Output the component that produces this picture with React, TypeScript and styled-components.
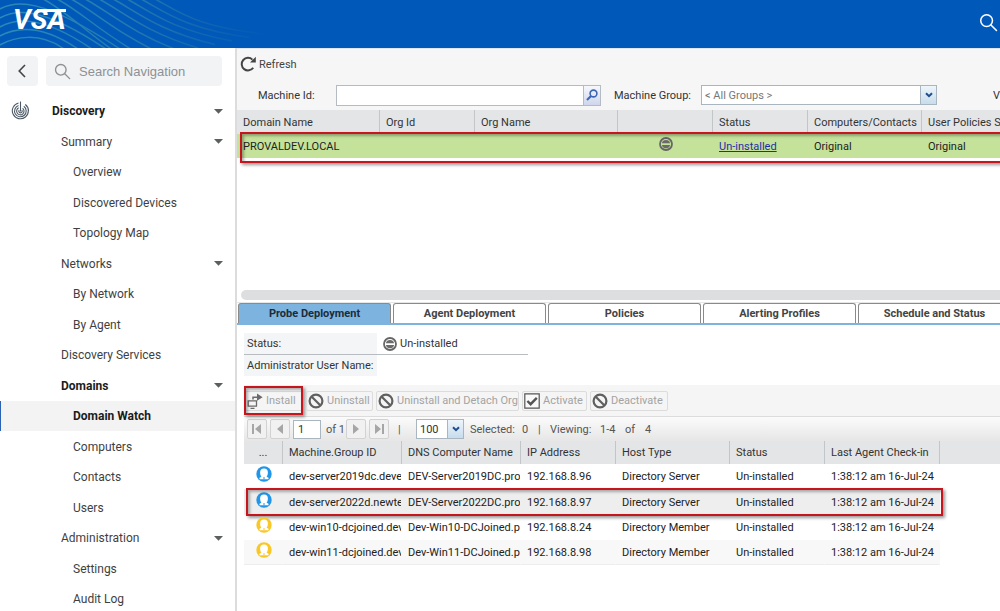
import React from 'react';
import styled, { createGlobalStyle, css } from 'styled-components';

const GlobalStyle = createGlobalStyle`
  *, *::before, *::after { box-sizing: border-box; }
  body { margin: 0; background: #fff; overflow: hidden; }
  body, button, input, select { font-family: Roboto, "Liberation Sans", sans-serif; }
`;

const RED = '#c4161c';

const annotation = css`
  content: '';
  position: absolute;
  border: 2px solid ${RED};
  box-shadow: 2px 2px 3px rgba(0, 0, 0, 0.4), inset 2px 2px 3px rgba(0, 0, 0, 0.3);
  pointer-events: none;
`;

/* ---------- shell ---------- */

const Shell = styled.div`
  display: flex;
  flex-direction: column;
  height: 100vh;
  overflow: hidden;
  color: #333;
`;

const Header = styled.header`
  position: relative;
  display: flex;
  align-items: center;
  justify-content: space-between;
  flex: none;
  height: 48px;
  padding: 0 2px 8px 13px;
  background: #0059b8;
`;

const Waves = styled.svg`
  position: absolute;
  top: 0;
  left: 0;
`;

const Logo = styled.a`
  position: relative;
  color: #fff;
  font-size: 28px;
  line-height: 40px;
  font-weight: 700;
  font-style: italic;
  text-decoration: none;
  &::after {
    content: '';
    position: absolute;
    top: 9px;
    left: 24px;
    right: 0;
    height: 3px;
    background: #fff;
  }
`;

const HeaderSearch = styled.button`
  position: relative;
  display: flex;
  margin-top: 4px;
  padding: 0;
  border: 0;
  background: none;
  color: #fff;
`;

const Body = styled.div`
  display: flex;
  flex: 1;
  min-height: 0;
`;

/* ---------- sidebar ---------- */

const Sidebar = styled.nav`
  flex: none;
  width: 237px;
  border-right: 2px solid #dcdcdc;
  overflow: hidden;
`;

const SidebarTop = styled.div`
  display: flex;
  gap: 8px;
  padding: 8px 13px 10px 7px;
`;

const BackButton = styled.button`
  display: flex;
  align-items: center;
  justify-content: center;
  width: 31px;
  height: 30px;
  padding: 0 2px 0 0;
  border: 0;
  border-radius: 4px;
  background: #f2f3f4;
  color: #444;
`;

const NavSearch = styled.label`
  display: flex;
  flex: 1;
  align-items: center;
  gap: 8px;
  min-width: 0;
  height: 30px;
  padding: 0 8px;
  border-radius: 4px;
  background: #f2f3f4;
  color: #8d9194;
`;

const NavSearchInput = styled.input`
  flex: 1;
  min-width: 0;
  padding: 0;
  border: 0;
  background: none;
  outline: 0;
  font-family: "Liberation Sans", sans-serif;
  font-size: 13px;
  &::placeholder { color: #8d9194; opacity: 1; }
`;

const NavList = styled.ul`
  margin: 0;
  padding: 0;
  list-style: none;
`;

const navRow = css<{ $level: number; $bold?: boolean; $active?: boolean }>`
  display: flex;
  align-items: center;
  width: 100%;
  height: 100%;
  padding: 0 12px 0 ${p => [52, 61, 73][p.$level]}px;
  border: 0;
  background: none;
  color: ${p => (p.$bold ? '#1c1c1c' : '#3f3f3f')};
  font-size: 12px;
  font-weight: ${p => (p.$bold ? 700 : 400)};
  text-align: left;
  text-decoration: none;
`;

const NavItem = styled.li`
  height: 30px;
  &:nth-child(even) { height: 31px; }
`;

const NavGroup = styled.button`
  ${navRow}
  justify-content: space-between;
  position: relative;
`;

const NavLink = styled.a`
  ${navRow}
  ${p => p.$active && css`
    background: #f3f3f4;
    box-shadow: inset 1px 0 0 #2b62b4;
  `}
`;

const Radar = styled.svg`
  position: absolute;
  left: 11px;
  top: 5px;
`;

/* ---------- main, upper pane ---------- */

const Main = styled.main`
  flex: 1;
  min-width: 0;
  overflow: hidden;
  font-size: 11px;
`;

const Filters = styled.section`
  height: 62px;
  background: #f6f6f6;
  border-top: 1px solid #dfe6ee;
`;

const Refresh = styled.button`
  display: flex;
  align-items: center;
  gap: 3px;
  height: 30px;
  padding: 0 3px;
  border: 0;
  background: none;
  color: #444;
  font-size: 11px;
`;

const FilterRow = styled.div`
  display: flex;
  align-items: center;
  height: 32px;
  padding-left: 8px;
  white-space: nowrap;
`;

const Label = styled.label<{ $width: number }>`
  flex: none;
  width: ${p => p.$width}px;
  padding-left: 13px;
`;

const Field = styled.div<{ $width: number }>`
  display: flex;
  flex: none;
  width: ${p => p.$width}px;
  height: 21px;
  border: 1px solid #b3bcc4;
  background: #fff;
`;

const FieldInput = styled.input`
  flex: 1;
  min-width: 0;
  padding: 0 5px;
  border: 0;
  outline: 0;
  background: none;
  font-size: 11px;
`;

const FieldButton = styled.button`
  display: flex;
  flex: none;
  align-items: center;
  justify-content: center;
  width: 17px;
  padding: 0;
  border: 0;
  border-left: 1px solid #b3bcc4;
  background: linear-gradient(#f7f8fc, #cfd6ec);
`;

const SelectBox = styled.div<{ $width: number }>`
  position: relative;
  display: flex;
  flex: none;
  width: ${p => p.$width}px;
  height: 20px;
  border: 1px solid #a9b5bf;
  background: #fff;
`;

const Select = styled.select<{ $strong?: boolean }>`
  appearance: none;
  width: 100%;
  padding: 0 18px 0 3px;
  border: 0;
  outline: 0;
  background: none;
  color: ${p => (p.$strong ? '#333' : '#777')};
  font-size: 11px;
`;

const SelectArrow = styled.span`
  position: absolute;
  top: 0;
  right: 0;
  bottom: 0;
  display: flex;
  align-items: center;
  justify-content: center;
  width: 16px;
  border-left: 1px solid #a9b5bf;
  background: linear-gradient(#eef5fb, #c8dcec);
  pointer-events: none;
`;

const ViewLabel = styled.span`
  margin-left: 56px;
`;

const DataTable = styled.table`
  border-collapse: separate;
  border-spacing: 0;
  table-layout: fixed;
  white-space: nowrap;
  text-align: left;
`;

const HeadCell = styled.th`
  padding: 0 0 0 6px;
  border-right: 1px solid #c3c6c8;
  background: #e3e5e7;
  font-weight: 400;
  overflow: hidden;
`;

const Cell = styled.td`
  padding: 0 0 0 6px;
  border-right: 1px solid transparent;
  overflow: hidden;
  color: #222;
`;

const DomainPane = styled.section`
  position: relative;
  height: 180px;
  overflow: hidden;
`;

const DomainTable = styled(DataTable)`
  width: 830px;
  ${HeadCell} { height: 24px; }
  ${Cell} { height: 24px; background: #c5e29b; }
`;

const DomainRow = styled.tr`
  position: relative;
  &::after {
    ${annotation}
    inset: -2px 0 -5px 3px;
  }
`;

const StatusLink = styled.a`
  color: #1f2fa8;
`;

const CenterIcon = styled.div`
  display: flex;
  justify-content: center;
  padding: 0 5px 5px 0;
`;

const ScrollTrack = styled.div`
  height: 10px;
  margin: 0 0 2px 4px;
  border-radius: 5px 0 0 5px;
  background: #dcdee0;
`;

/* ---------- main, lower pane ---------- */

const Tabs = styled.div`
  display: flex;
  gap: 2px;
  padding-left: 1px;
  border-top: 1px solid #e6e6e6;
  border-bottom: 2px solid #7fb2dc;
`;

const Tab = styled.button<{ $active?: boolean }>`
  flex: none;
  width: 153px;
  height: 20px;
  padding: 0;
  border: 1px solid #8a8a8a;
  border-bottom: 0;
  border-radius: 3px 3px 0 0;
  background: ${p => (p.$active ? '#7db4df' : '#fff')};
  color: ${p => (p.$active ? '#1e2b3a' : '#444')};
  font-size: 11px;
  font-weight: 700;
`;

const Detail = styled.section`
  padding: 8px 0 0 7px;
`;

const StatusGrid = styled.dl`
  display: grid;
  grid-template-columns: 133px 151px;
  margin: 0 0 9px;
  line-height: 21px;
`;

const Term = styled.dt<{ $line?: boolean }>`
  padding-left: 3px;
  background: #f4f5f7;
  border-bottom: ${p => (p.$line ? '1px solid #b9bcc0' : '0')};
`;

const Value = styled.dd<{ $line?: boolean }>`
  display: flex;
  align-items: center;
  gap: 3px;
  margin: 0;
  padding-left: 6px;
  border-bottom: ${p => (p.$line ? '1px solid #b9bcc0' : '0')};
`;

const ActionBar = styled.div`
  display: flex;
  align-items: center;
  gap: 3px;
  height: 31px;
  padding-left: 1px;
  background: #f5f5f5;
`;

const Action = styled.button<{ $width: number; $marked?: boolean }>`
  position: relative;
  display: flex;
  flex: none;
  align-items: center;
  gap: 3px;
  width: ${p => p.$width}px;
  height: 20px;
  padding: 0 0 0 1px;
  border: 1px solid #dcdcdc;
  border-radius: 2px;
  background: none;
  color: #a3a3a3;
  font-size: 11px;
  white-space: nowrap;
  svg { flex: none; }
  ${p => p.$marked && css`
    &::after {
      ${annotation}
      inset: -6px -1px -5px -2px;
    }
  `}
`;

const Pager = styled.div`
  display: flex;
  align-items: center;
  height: 25px;
  padding-left: 3px;
  border-top: 1px solid #dcdcdc;
  background: linear-gradient(#fbfbfb, #e6e6e6);
  color: #555;
  white-space: nowrap;
`;

const PageButton = styled.button`
  display: flex;
  align-items: center;
  justify-content: center;
  width: 20px;
  height: 20px;
  margin-right: 3px;
  padding: 0;
  border: 1px solid #d2d2d2;
  border-radius: 2px;
  background: #f1f1f1;
`;

const PageInput = styled.input`
  width: 28px;
  height: 19px;
  margin-right: 5px;
  padding: 0 4px;
  border: 1px solid #a9b5bf;
  font-size: 11px;
  color: #333;
`;

const PageText = styled.span<{ $width: number }>`
  flex: none;
  width: ${p => p.$width}px;
`;

const PageDivider = styled.span`
  width: 24px;
  padding-left: 6px;
`;

const PageStatus = styled.div`
  display: flex;
  padding-left: 6px;
`;

const AgentTable = styled(DataTable)`
  width: 696px;
  ${HeadCell} { height: 23px; }
  ${HeadCell}:first-child { padding: 0; text-align: center; }
  ${Cell} { height: 25px; }
`;

const AgentGrid = styled.div`
  background: linear-gradient(#e3e5e7, #e3e5e7) 0 0 / 100% 23px no-repeat;
`;

const AgentRow = styled.tr<{ $marked?: boolean; $alt?: boolean }>`
  position: relative;
  ${p => p.$alt && css`${Cell} { background: #f8f8f8; border-bottom: 1px solid #ededed; }`}
  ${p => p.$marked && css`
    ${Cell} { height: 26px; background: #eeeeee; }
    &::after {
      ${annotation}
      inset: -1px -3px -1px 2px;
    }
  `}
`;

/* ---------- icons ---------- */

const SearchIcon = ({ size = 19 }: { size?: number }) => (
  <svg width={size} height={size} viewBox="0 0 20 20" fill="none" stroke="currentColor" strokeWidth="1.6" aria-hidden="true">
    <circle cx="8" cy="8" r="6.2" />
    <path d="M12.6 12.6 18.4 18.4" strokeLinecap="round" />
  </svg>
);

const Caret = () => (
  <svg width="9" height="5" viewBox="0 0 9 5" aria-hidden="true"><path d="M0 0h9L4.5 4.8z" fill="#5b605f" /></svg>
);

const Chevron = () => (
  <svg width="8" height="6" viewBox="0 0 8 6" fill="none" stroke="#1f4e8c" strokeWidth="2" aria-hidden="true">
    <path d="M1 1.2 4 4.2 7 1.2" />
  </svg>
);

const EqualBadge = () => (
  <svg width="14" height="14" viewBox="0 0 14 14" aria-hidden="true">
    <circle cx="7" cy="7" r="6" fill="none" stroke="#666" strokeWidth="1.8" />
    <path d="M2.900 6.300A4.200 4.200 0 0 1 11.100 6.300zM2.900 7.900A4.200 4.200 0 0 0 11.100 7.900z" fill="#6a6a6a" />
  </svg>
);

const BanIcon = () => (
  <svg width="16" height="16" viewBox="0 0 16 16" fill="none" stroke="#606060" strokeWidth="2.2" aria-hidden="true">
    <circle cx="8" cy="8" r="6.4" />
    <path d="M3.5 3.5 12.5 12.5" />
  </svg>
);

const InstallIcon = () => (
  <svg width="16" height="16" viewBox="0 0 16 16" fill="none" stroke="#6a6a6a" aria-hidden="true">
    <path d="M1.200 7.800h8.300v5.400H1.200zM3.500 15.300h4" strokeWidth="1.300" />
    <path d="M6 6.500V4.200H11" strokeWidth="1.500" />
    <path d="M10 .6 15.600 4.200 10 7.800z" fill="#6a6a6a" stroke="none" />
  </svg>
);

const CheckIcon = () => (
  <svg width="16" height="16" viewBox="0 0 16 16" fill="none" stroke="#555" aria-hidden="true">
    <path d="M.8.8h14.4v14.4H.8z" strokeWidth="1.2" fill="#fafafa" />
    <path d="M3.4 8 6.6 11.2 12.8 4.8" strokeWidth="2.4" />
  </svg>
);

const PageIcon = ({ dir, edge }: { dir: 'prev' | 'next'; edge?: boolean }) => (
  <svg width="12" height="12" viewBox="0 0 12 12" fill="#a6a6a6" aria-hidden="true">
    <g transform={dir === 'next' ? 'matrix(-1 0 0 1 12 0)' : undefined}>
      <path d={edge ? 'M10 1v10L4 6zM1 1h2v10H1z' : 'M9 1v10L3 6z'} />
    </g>
  </svg>
);

const AgentIcon = ({ color }: { color: string }) => (
  <svg width="16" height="16" viewBox="0 0 16 16" aria-hidden="true">
    <circle cx="8" cy="8" r="7.700" fill={color} />
    <path d="M8 2.400c2.500 0 3.900 1.600 3.900 4 0 1.900-.6 3.300-1.300 4.300l1.900 1v1.500H3.500v-1.500l1.900-1C4.700 9.700 4.100 8.300 4.100 6.400c0-2.400 1.400-4 3.900-4z" fill="#fff" />
    <path d="M7 11h2v2.200H7z" fill={color} opacity=".5" />
  </svg>
);

const humps = Array.from({ length: 5 }, (_, i) =>
  `M-2 ${46 - 9 * i}C15 ${36 - 9 * i} 40 ${32 - 9 * i} ${64 + 14 * i} 49`);

const slopes = Array.from({ length: 9 }, (_, i) => {
  const x = 45 + 14 * i;
  return `M${x - 12} -6L${x} 0C${x + 25} 14 ${90 + 14 * i} ${36 - i} ${130 + 17 * i} ${62 - 3.5 * i}`;
});

const HeaderWaves = () => (
  <Waves width="300" height="48" viewBox="0 0 300 48" fill="none" aria-hidden="true">
    <defs>
      <linearGradient id="fade" gradientUnits="userSpaceOnUse" x1="0" y1="0" x2="270" y2="0">
        <stop offset="0" stopColor="#2a8bb8" />
        <stop offset=".5" stopColor="#2479ae" />
        <stop offset="1" stopColor="#1f6fa8" stopOpacity="0" />
      </linearGradient>
    </defs>
    {[...humps, ...slopes].map(d => <path key={d} d={d} stroke="url(#fade)" strokeWidth="1.500" />)}
  </Waves>
);

/* ---------- data ---------- */

type Nav = { text: string; level: number; group?: boolean; bold?: boolean; active?: boolean };

const navigation: Nav[] = [
  { text: 'Discovery', level: 0, group: true, bold: true },
  { text: 'Summary', level: 1, group: true },
  { text: 'Overview', level: 2 },
  { text: 'Discovered Devices', level: 2 },
  { text: 'Topology Map', level: 2 },
  { text: 'Networks', level: 1, group: true },
  { text: 'By Network', level: 2 },
  { text: 'By Agent', level: 2 },
  { text: 'Discovery Services', level: 1 },
  { text: 'Domains', level: 1, group: true, bold: true },
  { text: 'Domain Watch', level: 2, bold: true, active: true },
  { text: 'Computers', level: 2 },
  { text: 'Contacts', level: 2 },
  { text: 'Users', level: 2 },
  { text: 'Administration', level: 1, group: true },
  { text: 'Settings', level: 2 },
  { text: 'Audit Log', level: 2 },
];

const domainColumns = [
  ['Domain Name', 143], ['Org Id', 95], ['Org Name', 143], ['', 95],
  ['Status', 95], ['Computers/Contacts', 114], ['User Policies Status', 145],
] as const;

const agentColumns = [
  ['...', 39], ['Machine.Group ID', 119], ['DNS Computer Name', 119], ['IP Address', 95],
  ['Host Type', 114], ['Status', 95], ['Last Agent Check-in', 115],
] as const;

const BLUE = '#2196e8';
const YELLOW = '#f8c828';

const agents = [
  { color: BLUE, id: 'dev-server2019dc.develo', dns: 'DEV-Server2019DC.prova', ip: '192.168.8.96', host: 'Directory Server' },
  { color: BLUE, id: 'dev-server2022d.newtes', dns: 'DEV-Server2022DC.prova', ip: '192.168.8.97', host: 'Directory Server', marked: true },
  { color: YELLOW, id: 'dev-win10-dcjoined.deve', dns: 'Dev-Win10-DCJoined.pro', ip: '192.168.8.24', host: 'Directory Member' },
  { color: YELLOW, id: 'dev-win11-dcjoined.deve', dns: 'Dev-Win11-DCJoined.pro', ip: '192.168.8.98', host: 'Directory Member', alt: true },
];

const tabs = ['Probe Deployment', 'Agent Deployment', 'Policies', 'Alerting Profiles', 'Schedule and Status'];

const Columns = ({ items }: { items: readonly (readonly [string, number])[] }) => (
  <>
    <colgroup>{items.map(([name, width], i) => <col key={name + i} width={width} />)}</colgroup>
    <thead><tr>{items.map(([name], i) => <HeadCell key={name + i} scope="col">{name}</HeadCell>)}</tr></thead>
  </>
);

export default function App() {
  return (
    <Shell>
      <GlobalStyle />
      <Header>
        <HeaderWaves />
        <Logo href="#home">VSA</Logo>
        <HeaderSearch aria-label="Search"><SearchIcon /></HeaderSearch>
      </Header>
      <Body>
        <Sidebar aria-label="Navigation">
          <SidebarTop>
            <BackButton aria-label="Collapse navigation">
              <svg width="8" height="14" viewBox="0 0 8 14" fill="none" stroke="currentColor" strokeWidth="1.6"><path d="M7 1 1.200 7 7 13" /></svg>
            </BackButton>
            <NavSearch>
              <SearchIcon size={17} />
              <NavSearchInput placeholder="Search Navigation" aria-label="Search Navigation" />
            </NavSearch>
          </SidebarTop>
          <NavList>
            {navigation.map(n => (
              <NavItem key={n.text}>
                {n.group ? (
                  <NavGroup $level={n.level} $bold={n.bold} aria-expanded="true">
                    {n.level === 0 && (
                      <Radar width="19" height="19" viewBox="0 0 19 19" fill="none" stroke="#4d5a66" strokeWidth="1.100" aria-hidden="true">
                        <path d="M7.500 2A8 8 0 1 0 14.300 3.500 A8 8 0 0 1 17.500 10" />
                        <path d="M7.500 4.500A5.800 5.800 0 1 0 12.800 5.300" />
                        <path d="M7.700 6.800A3.700 3.700 0 1 0 11.600 7.200" />
                        <path d="M8.200 9A1.700 1.700 0 1 0 10.800 9" />
                        <path d="M9.500 10.500V.5" />
                      </Radar>
                    )}
                    {n.text}
                    <Caret />
                  </NavGroup>
                ) : (
                  <NavLink href="#nav" $level={n.level} $bold={n.bold} $active={n.active}>{n.text}</NavLink>
                )}
              </NavItem>
            ))}
          </NavList>
        </Sidebar>
        <Main>
          <Filters>
            <Refresh>
              <svg width="16" height="16" viewBox="0 0 16 16" fill="none" stroke="#444" strokeWidth="2" aria-hidden="true">
                <path d="M13.200 11.700A6.300 6.300 0 1 1 12.400 3.600" />
                <path d="M15.800.8v5.800H10z" fill="#444" stroke="none" />
              </svg>
              Refresh
            </Refresh>
            <FilterRow>
              <Label $width={91} htmlFor="machine-id">Machine Id:</Label>
              <Field $width={265}>
                <FieldInput id="machine-id" />
                <FieldButton aria-label="Find machine">
                  <svg width="12" height="12" viewBox="0 0 12 12" fill="none" stroke="#3b67b5" aria-hidden="true">
                    <circle cx="7.500" cy="4.500" r="3.400" strokeWidth="1.600" />
                    <path d="M5 7 1 11" strokeWidth="2.200" />
                  </svg>
                </FieldButton>
              </Field>
              <Label $width={100} htmlFor="machine-group">Machine Group:</Label>
              <SelectBox $width={236}>
                <Select id="machine-group"><option>&lt; All Groups &gt;</option></Select>
                <SelectArrow><Chevron /></SelectArrow>
              </SelectBox>
              <ViewLabel>View:</ViewLabel>
            </FilterRow>
          </Filters>
          <DomainPane>
            <DomainTable>
              <Columns items={domainColumns} />
              <tbody>
                <DomainRow>
                  <Cell>PROVALDEV.LOCAL</Cell>
                  <Cell />
                  <Cell />
                  <Cell><CenterIcon><EqualBadge /></CenterIcon></Cell>
                  <Cell><StatusLink href="#status">Un-installed</StatusLink></Cell>
                  <Cell>Original</Cell>
                  <Cell>Original</Cell>
                </DomainRow>
              </tbody>
            </DomainTable>
          </DomainPane>
          <ScrollTrack />
          <Tabs role="tablist">
            {tabs.map((t, i) => <Tab key={t} role="tab" aria-selected={i === 0} $active={i === 0}>{t}</Tab>)}
          </Tabs>
          <Detail>
            <StatusGrid>
              <Term $line>Status:</Term>
              <Value $line><EqualBadge />Un-installed</Value>
              <Term>Administrator User Name:</Term>
              <Value />
            </StatusGrid>
            <ActionBar>
              <Action $width={58} $marked><InstallIcon />Install</Action>
              <Action $width={67}><BanIcon />Uninstall</Action>
              <Action $width={143}><BanIcon />Uninstall and Detach Org</Action>
              <Action $width={65}><CheckIcon />Activate</Action>
              <Action $width={78}><BanIcon />Deactivate</Action>
            </ActionBar>
            <Pager>
              <PageButton aria-label="First page"><PageIcon dir="prev" edge /></PageButton>
              <PageButton aria-label="Previous page"><PageIcon dir="prev" /></PageButton>
              <PageInput aria-label="Page" defaultValue="1" />
              <PageText $width={20}>of 1</PageText>
              <PageButton aria-label="Next page"><PageIcon dir="next" /></PageButton>
              <PageButton aria-label="Last page"><PageIcon dir="next" edge /></PageButton>
              <PageDivider>|</PageDivider>
              <SelectBox $width={48}>
                <Select $strong aria-label="Rows per page"><option>100</option></Select>
                <SelectArrow><Chevron /></SelectArrow>
              </SelectBox>
              <PageStatus>
                <PageText $width={52}>Selected:</PageText>
                <PageText $width={16}>0</PageText>
                <PageText $width={12}>|</PageText>
                <PageText $width={50}>Viewing:</PageText>
                <PageText $width={25}>1-4</PageText>
                <PageText $width={20}>of</PageText>
                <PageText $width={10}>4</PageText>
              </PageStatus>
            </Pager>
            <AgentGrid>
              <AgentTable>
                <Columns items={agentColumns} />
                <tbody>
                  {agents.map(a => (
                    <AgentRow key={a.ip} $marked={a.marked} $alt={a.alt}>
                      <Cell><CenterIcon><AgentIcon color={a.color} /></CenterIcon></Cell>
                      <Cell>{a.id}</Cell>
                      <Cell>{a.dns}</Cell>
                      <Cell>{a.ip}</Cell>
                      <Cell>{a.host}</Cell>
                      <Cell>Un-installed</Cell>
                      <Cell>1:38:12 am 16-Jul-24</Cell>
                    </AgentRow>
                  ))}
                </tbody>
              </AgentTable>
            </AgentGrid>
          </Detail>
        </Main>
      </Body>
    </Shell>
  );
}
